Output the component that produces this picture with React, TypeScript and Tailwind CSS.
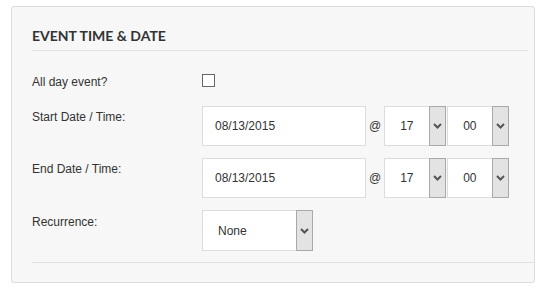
import React from "react";

const Chevron = () => (
  <svg width="9" height="6" viewBox="0 0 9 6" className="block">
    <path d="M1 1 L4.5 4.5 L8 1" fill="none" stroke="#555" strokeWidth="2" />
  </svg>
);

const Select = ({ value, width, height }: { value: string; width: string; height: string }) => (
  <div className={`flex ${width} ${height} bg-white border border-[#dcdcdc]`}>
    <div className="flex-1 flex items-center pl-[15px] text-[12px] text-[#333]">{value}</div>
    <div className="w-[17px] -my-px -mr-px flex items-center justify-center bg-[#e3e3e3] border border-[#a9a9a9]">
      <Chevron />
    </div>
  </div>
);

const DateInput = () => (
  <div className="w-[164px] h-[40px] bg-white border border-[#dcdcdc] flex items-center pl-[12px] text-[12px] text-[#333]">
    08/13/2015
  </div>
);

const DateTimeRow = ({ label }: { label: string }) => (
  <div className="flex items-start">
    <div className="w-[170px] pt-[3px] leading-[16px]">{label}</div>
    <div className="flex items-center">
      <DateInput />
      <span className="px-[3px] text-[12px] leading-[16px] text-[#333]">@</span>
      <div className="flex gap-[1px]">
        <Select value="17" width="w-[62px]" height="h-[40px]" />
        <Select value="00" width="w-[62px]" height="h-[40px]" />
      </div>
    </div>
  </div>
);

export default function App() {
  return (
    <div className="w-[547px] h-[296px] bg-white pt-[6px] pl-[11px]" style={{ fontFamily: '"Liberation Sans", Arial, sans-serif' }}>
      <div className="w-[524px] h-[277px] bg-[#f7f7f7] border border-[#dcdcdc] rounded-[3px] pl-[20px] pt-[19px] text-[12px] text-[#333]">
        <div className="mr-[6px] border-b border-[#e2e2e2] pb-[4px]">
          <div className="text-[14px] leading-[20px] font-bold text-[#333]" style={{ fontFamily: "Lato, sans-serif" }}>
            EVENT TIME &amp; DATE
          </div>
        </div>
        <div className="flex flex-col">
          <div className="flex items-start mt-[23px]">
            <div className="w-[170px] leading-[16px]">All day event?</div>
            <div className="w-[13px] h-[13px] border-[1.5px] border-[#666] bg-white mt-[0px]" />
          </div>
          <div className="mt-[16px]">
            <DateTimeRow label="Start Date / Time:" />
          </div>
          <div className="mt-[12px]">
            <DateTimeRow label="End Date / Time:" />
          </div>
          <div className="mt-[12px] flex items-start">
            <div className="w-[170px] pt-[4px] leading-[16px]">Recurrence:</div>
            <Select value="None" width="w-[111px]" height="h-[41px]" />
          </div>
        </div>
        <div className="mt-[11px] border-b border-[#e2e2e2]" />
      </div>
    </div>
  );
}
